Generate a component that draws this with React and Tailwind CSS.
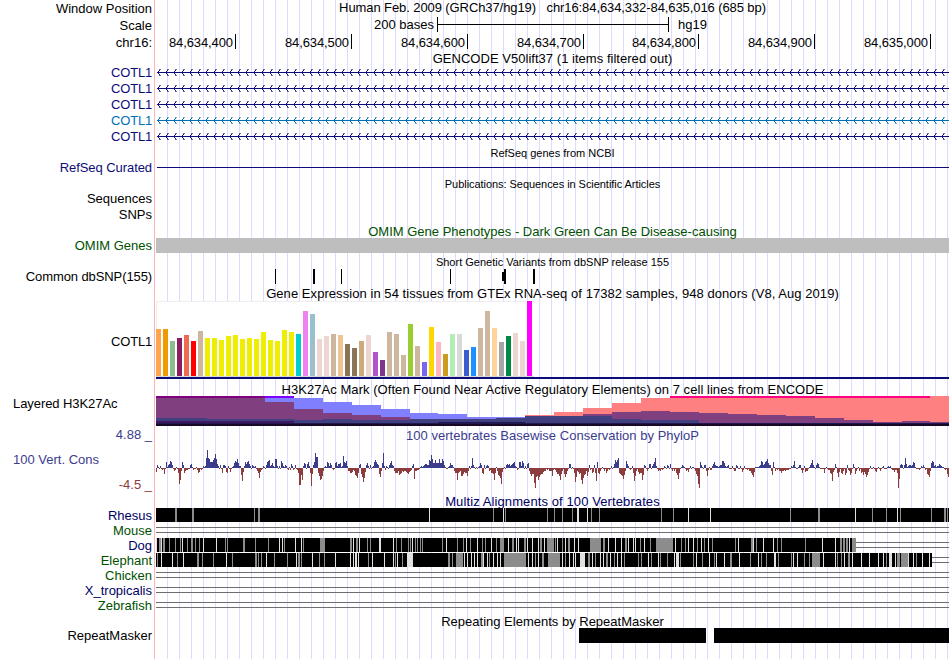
// src/App.jsx

import React from 'react';
import clsx from 'clsx';

const WIDTH = 793;

// Left column, one entry per row
const LABELS = [
  { text: 'Window Position', row: 'h-[17px] leading-[17px]' },
  { text: 'Scale', row: 'h-[17px] leading-[17px]' },
  { text: 'chr16:', row: 'h-[17px] leading-[17px] mb-[14px]' },
  { text: 'COTL1', row: 'h-4 leading-4 text-[#0c0c78] tracking-[-0.2px]' },
  { text: 'COTL1', row: 'h-4 leading-4 text-[#0c0c78] tracking-[-0.2px]' },
  { text: 'COTL1', row: 'h-4 leading-4 text-[#0c0c78] tracking-[-0.2px]' },
  { text: 'COTL1', row: 'h-4 leading-4 text-[#006fb4] tracking-[-0.2px]' },
  { text: 'COTL1', row: 'h-4 leading-4 text-[#0c0c78] tracking-[-0.2px] mb-[15px]' },
  { text: 'RefSeq Curated', row: 'h-4 leading-4 text-[#0c0c78] tracking-[-0.07px] mb-[15px]' },
  { text: 'Sequences', row: 'h-4 leading-4' },
  { text: 'SNPs', row: 'h-4 leading-4 mb-[15px]' },
  { text: 'OMIM Genes', row: 'h-4 leading-4 text-[#005000] mb-[15px]' },
  { text: 'Common dbSNP(155)', row: 'h-4 leading-4 tracking-[-0.1px] mb-4' },
  { text: 'COTL1', row: 'h-[78px] leading-[81px] tracking-[-0.2px] mb-[17px]' },
  { text: 'Layered H3K27Ac', row: 'h-[30px] leading-4 tracking-[-0.07px] pl-[13px] text-left' },
];

const SPECIES = [
  { text: 'Rhesus', color: 'text-[#000064]' },
  { text: 'Mouse', color: 'text-[#005000]' },
  { text: 'Dog', color: 'text-[#000064]' },
  { text: 'Elephant', color: 'text-[#005000]' },
  { text: 'Chicken', color: 'text-[#005000]' },
  { text: 'X_tropicalis', color: 'text-[#000064]' },
  { text: 'Zebrafish', color: 'text-[#005000]' },
];

const RULER = [
  { text: '84,634,400', width: 80 },
  { text: '84,634,500', width: 116 },
  { text: '84,634,600', width: 116 },
  { text: '84,634,700', width: 116 },
  { text: '84,634,800', width: 115 },
  { text: '84,634,900', width: 116 },
  { text: '84,635,000', width: 116 },
];

// x, y, width, height
const SNPS = [
  [119, 0, 1, 15],
  [157, 0, 2, 15],
  [185, 0, 1, 15],
  [294, 0, 1, 15],
  [346, 3, 2, 9],
  [348, 0, 2, 15],
  [377, 0, 2, 15],
];

const YELLOW = '#eeee00';
const TISSUES = [
  [47, '#ffa54f'], [47, '#ee9a00'], [35, '#8fbc8f'], [38, '#8b1c62'], [41, '#ee6a50'], [35, '#ff0000'], [45, '#cdb79e'],
  [38, YELLOW], [38, YELLOW], [36, YELLOW], [40, YELLOW], [41, YELLOW], [37, YELLOW], [38, YELLOW], [37, YELLOW],
  [44, YELLOW], [36, YELLOW], [35, YELLOW], [46, YELLOW], [44, YELLOW],
  [42, '#00cdcd'], [65, '#ee82ee'], [62, '#9ac0cd'], [37, '#eed5d2'], [40, '#eed5d2'], [42, '#cdb79e'], [41, '#eec591'],
  [32, '#8b7355'], [28, '#8b7355'], [35, '#cdaa7d'], [41, '#eed5d2'], [24, '#b452cd'], [16, '#7a378b'], [44, '#cdb79e'],
  [42, '#cdb79e'], [21, '#cdb79e'], [52, '#9acd32'], [30, '#cdb79e'], [14, '#7a67ee'], [49, '#ffd700'], [34, '#ffb6c1'],
  [22, '#cd9b1d'], [42, '#b4eeb4'], [42, '#d9d9d9'], [26, '#3a5fcd'], [29, '#1e90ff'], [48, '#cdb79e'], [65, '#cdb79e'],
  [48, '#ffd39b'], [34, '#a6a6a6'], [40, '#008b45'], [43, '#eed5d2'], [35, '#eed5d2'], [75, '#ff00ff'],
];

// Stacked signal areas, each a list of [x, top] steps that ends at `end`
const H3K27 = [
  { fill: '#8080ff', end: 398, steps: [[109, 2], [167, 6], [196, 9], [225, 13], [254, 17], [282, 18], [311, 21], [340, 21]] },
  { fill: '#8000ff', end: 138, bottom: 2, steps: [[109, 0]] },
  { fill: '#ff8080', end: 793, steps: [[369, 19], [398, 16], [427, 12], [456, 7], [485, 2], [514, 0]] },
  { fill: '#ff0080', end: 774, bottom: 2, steps: [[514, 0]] },
  { fill: '#804080', end: 311, steps: [[0, 0], [109, 6], [138, 13], [167, 17], [196, 19], [225, 21], [254, 23]] },
  { fill: '#800080', end: 109, bottom: 2, steps: [[0, 0]] },
  { fill: '#804080', end: 793, steps: [[369, 20], [427, 18], [456, 16], [485, 15], [514, 16], [543, 17], [572, 18], [601, 19], [630, 20], [659, 22], [688, 24], [717, 26], [746, 25], [774, 26]] },
  { fill: '#404080', end: 543, steps: [[0, 22], [51, 23], [138, 24], [167, 23], [196, 24], [254, 23], [340, 22], [369, 20], [456, 23], [485, 24]] },
  { fill: '#401860', end: 138, steps: [[0, 25]] },
  { fill: '#201850', end: 793, steps: [[0, 27], [22, 27], [138, 27], [282, 26], [369, 27], [543, 27]] },
  { fill: '#180828', end: 793, steps: [[0, 28]] },
];

// Conservation score per pixel, in pixels above or below the axis
const PHYLOP = [
  -4, 3, 1, -1, 2, -1, -2, -1, -6, -1, 6, 1, 3, 4, 7, 6, 3, -1, -3, -2, 1, -1, -5, -16, -12, -3, 6, 3, -5, -3,
  -2, -2, -1, -1, 3, 4, 1, -2, -1, -1, 1, -2, -5, -4, -1, -2, -1, 2, 1, 2, 10, 18, 10, 9, 6, 6, 6, 8, 10, 14,
  9, 4, 2, 0, 3, -1, -5, 3, 3, 2, -4, -5, 2, -1, -4, -1, 1, 2, 5, 7, 6, 9, 5, 2, 2, -7, -13, -4, 2, 6,
  4, 6, 7, 4, 2, -1, 3, 2, 1, 2, -1, -3, -5, -10, -4, -2, -1, 2, 1, -1, 3, 6, 7, 8, 2, 3, 5, 2, 1, 9,
  9, 2, -1, 2, -1, 7, 5, 2, 1, 3, 2, -1, -2, 1, -2, 4, 2, -2, -1, 3, -1, -2, -5, -17, -17, -7, -12, 2, 5, 4,
  -1, 4, 6, 2, -5, -18, -6, 3, 6, 15, 11, 11, -5, -8, -12, -11, -8, -3, 1, 2, 1, 6, 5, 2, 5, 3, -1, -2, -1, 5,
  6, 2, 4, 4, 5, 1, 2, 12, 6, 5, 7, 2, -3, -3, -5, -5, -4, -2, -3, -7, -8, -10, -5, 3, 4, -6, -9, -14, -10, -4,
  3, 5, 2, -1, 3, -1, 1, 2, 6, 8, 6, 4, 3, -6, -9, -3, 5, 15, 2, -2, 2, 1, -1, 3, 5, 7, 3, 2, -3,
  -5, -5, -5, -3, -7, -6, -5, -3, -4, -3, -3, -4, -5, -6, -4, -3, -2, 2, 4, -11,
  // 84,634,556
  -3, -3, -2, -2, -1, 1, 2, 1, 2, 3, 4, 4, 3, 3, 8, 7, 13, 9, 5, 5, 8, 5, 5, 5, 9, 5, 5, 9, 7, 3,
  1, -1, -1, 1, 2, 5, 3, 3, 1, -3, -5, -5, -12, -5, -4, -3, -8, -8, -6, -4, -5, -5, -8, -3, 2, -1, 2, 10, 3, 1,
  -1, 1, -1, 1, 2, 5, 3, -5, -6, 3, -1, 2, 3, 2, -3, -2, -5, -5, -6, -12, -5, 1, -3, -7, -8, -10, -16, -4, -1, 1,
  -1, 3, 4, 3, 4, 2, 3, 4, 5, 6, 2, 1, -2, -1, 6, 6, 2, 7, 5, -1, 2, -1, 4, 5, -3, -6, -8, -6, -6, -15,
  -20, -9, -8, -12, -9, -7, -6, -6, -4, -3, -3, -1, -2, -1, -3, -3, -3, -8, -2, -1, -2, -4, -6, -6, -8, -12, -6, -3, -1, -6,
  -9, -6, -3, -1, 4, 4, -1, 1, -1, -5, -14, -9, -3, -4, -6, -5, -12, -16, -10, -7, -6, -3, -8, -4, 3, -2, -1, -5, -4, 3,
  -5, -13, 6, -5, -6, -3, -1, 1, -1, -3, -1, -5, -3, -1, -2, -1, 2, -1, 1, 4, 8, 6, 8, 10, -5, -6, -7, -8, -11, -7,
  -3, 7, 4, 2, -1, -2, -1, 2, -5, -13, -8, -3, -1, -4, -6, -5, -5, -12, -7, 3, 2, -1, -3, -1, 4, 4, -1, 2, 4, 6,
  10, 2, -1, -3, -2, -3, -1, -2, -1, 2, 1, -1, 3, 2, -1, 4, -1, -3, -1, -3, -1, -5, -7, -11, -5, -1, 1,
  // 84,634,786
  3, 2, 1, -1, -3, -2, -4, -1, 2, -1, 1, 1, -1, -3, -6, -8, -16, -20, 6, 3, 1, -1, 3, 3, -3, -8, -2, 1, -2, -2,
  2, 4, 6, 3, 2, 2, 1, 2, 3, 3, 7, 7, 5, 2, 1, 2, 3, -1, -1, -1, 2, -1, -3, -3, 3, 2, -1, -1, 2, -1,
  -4, -2, 2, -1, -1, -2, -1, -3, -3, -5, -7, -9, -4, 1, 1, 1, 1, 2, 3, 7, 6, 3, 4, 6, 7, 9, 5, 3, 3, -3,
  -7, 6, 1, -3, -1, -2, -1, -3, -3, -5, -3, -3, -2, -3, -2, -2, -2, -1, -1, 2, 1, 3, 7, 1, -1, -1, 1, 3, 3, -2,
  -5, -2, 2, -4, -3, -3, -1, 1, 3, 5, 8, 3, 1, -1, 3, 5, 4, 1, -1, -1, -1, -1, -5, -1, 1, -1, -2, -2, -5, -6,
  -13, -4, -2, 4, 1, -5, -9, -4, -1, -5, -6, -3, -1, -7, -5, 3, -2, -3, -7, -5, -1, 4, 1, -6, -3, -1, 1, -3, -1, -5,
  -4, -7, -4, -6, -9, -7, -4, -1, 2, -1, -1, 1, -1, -3, -4, -1, 1, -1, -3, -1, 1, 2, -1, -1, -1, 1, 2, 1, 2, -1,
  -2, -2, -4, -2, -2, -5, -20, -11, 3, 4, 3, -1, 3, 10, 4, 1, 2, 3, 3, 2, 3, 6, 5, 1, -1, -1, -1, -2, -1, 2,
  1, 3, 1, -2, -1, -6, -7, -9, -3, 5, 7, 6, 2, 3, 1, 2, 2, 4, 3, 2, 1, 1, -1, -2, -1, -6, -9,
];

// Alignment gaps: offset, shade (g = grey, w = white) and an optional width
const RHESUS = '19g2 36g2 98g 102g2 273w 337g 347w 349g 391g 398g 406g 416g 421w2 431w 435g 443g 505g 517g 532w 554w 634g 662g2 699w 716g 730g 741w 744g 775g 788g2 791g';
const DOG = '0w 3g2 5w 7g2 13g 19g 24g 26w 31g 35g2 39g 43g 47w 60w 69g 71g 87g2 99g 112g 123w 126w 128g 139w 145w 147g 164g5 194g2 197w 200g2 203w 211g 214g 223w2 237w 240g 245g 252g 254g 256w 259g 261g 264g 266g 286g 290w 301g 307g 310w 314g 321w 326g 329g 335w 340g 344g4 352w 356g2 360w 362w 368g2 371w 376w 382w 384g2 388w 391g7 399g 401w 406g 409w 412g2 418w 422w 434g11 447g2 452w 459w 465w 469g2 472w 477w 479w 484g 488w 494g 500g17 519w 525g 529g 532w 537w 541g 545w 548g 552w 556g 579g 582w 595g2 597w 600g 607w 617w 621g 625g 649g 666w 679w 684g2 687g2 690g2 693w 696g4';
const ELEPHANT = '1g 5w 16w 21g 27w 41g2 46g 57g 70w 76g 99g2 102g 105g 110w 118g 131g 140w 142g2 145g 156w 163g 168g 179w 194w 197w 199w2 202w 212g 216w 228w 237w 239g 241w 246g 251w5 256w 292g2 296g 300g7 308w 311w 315w 318w 321w 325g2 327w 331w 333g 337w 341w 344w 348g22 372w 376w 379g 382w 386g2 392g12 406w 409g 413w 417w 419w 424w5 432g2 436w 439g 444w 447w 450g2 454w 458g 461w 465w 468g 482g 485g 492w 495g 502w 504g 511g 518w 520w3 524g 537g 540w 546g 553w 558g 560w 568w 574g2 583w 594g 602w 605g 610g 618w2 622g 635g 637w 641w 648g 653g 656g8 667w 679w 681g 685g 688w 692g2 696w 705w 713w 722w 727w 730g 733w3 739w 741g3 745g7 752w 757w 760g 766w 773w';

const Title = ({ children, className }) => (
  <div className={clsx('text-center whitespace-pre', className)}>{children}</div>
);

const Drawing = ({ height, className, children }) => (
  <svg width={WIDTH} height={height} shapeRendering="crispEdges" className={clsx('block', className)}>
    {children}
  </svg>
);

// Strand arrows, drawn pixel by pixel
const arrow = (x) =>
  `M${x} 7h1v1h-1zM${x + 1} 6h1v1h-1zM${x + 1} 8h1v1h-1zM${x + 2} 5h1v1h-1zM${x + 2} 9h1v1h-1z`;
const arrowEnds = (x) => `M${x + 3} 4h1v1h-1zM${x + 3} 10h1v1h-1zM${x + 2} 4h1v1h-1zM${x + 2} 10h1v1h-1z`;

const GeneRow = ({ color }) => {
  const tips = Array.from({ length: 99 }, (_, i) => 1 + i * 8);
  return (
    <Drawing height={16}>
      <rect x="1" y="7" width={WIDTH - 1} height="1" fill={color} />
      <path d={tips.map(arrow).join('')} fill={color} />
      <path d={tips.map(arrowEnds).join('')} fill={color} fillOpacity="0.6" />
    </Drawing>
  );
};

const stepPath = ({ steps, end, bottom = 30 }) => {
  const top = steps.map(([x, y], i) => `V${y}H${i + 1 < steps.length ? steps[i + 1][0] : end}`).join('');
  return `M${steps[0][0]} ${bottom}${top}V${bottom}Z`;
};

const GapLines = ({ from = 0 }) => (
  <>
    <rect x={from} y="4" width={WIDTH - from} height="1" fill="#6e6e6e" />
    <rect x={from} y="9" width={WIDTH - from} height="1" fill="#6e6e6e" />
  </>
);

const Alignment = ({ gaps, end = WIDTH }) => (
  <Drawing height={15}>
    {end < WIDTH && <GapLines from={end} />}
    <rect width={end} height="14" fill="#000" />
    {gaps.split(' ').map((gap) => {
      const [, x, shade, w] = gap.match(/(\d+)([gw])(\d*)/);
      return <rect key={gap} x={x} width={w || 1} height="14" fill={shade === 'g' ? '#8c8c8c' : '#e1e1e1'} />;
    })}
  </Drawing>
);

const NoAlignment = () => (
  <Drawing height={15}>
    <GapLines />
  </Drawing>
);

const App = () => {
  return (
    <div className="flex h-[659px] w-[950px] overflow-hidden bg-white font-['Liberation_Sans',Arial,sans-serif] text-[13px] text-black">
      {/* Track labels */}
      <div className="w-[155px] shrink-0 border-r border-[#ffb4b4] pr-[2px] text-right whitespace-nowrap">
        {LABELS.map((label, i) => (
          <div key={i} className={label.row}>{label.text}</div>
        ))}
        <div className="flex h-[82px] flex-col text-[#3c3c8c]">
          <div className="h-[17px] leading-[17px]">4.88 _</div>
          <div className="mt-[8px] h-[17px] pl-[13px] text-left leading-[17px]">100 Vert. Cons</div>
          <div className="mt-[8px] h-[17px] leading-[17px] text-[#8c3c3c]">-4.5 _</div>
        </div>
        {SPECIES.map((item) => (
          <div key={item.text} className={clsx('h-[15px] leading-[15px]', item.color)}>{item.text}</div>
        ))}
        <div className="mt-[15px] h-4 leading-4">RepeatMasker</div>
      </div>

      {/* Tracks */}
      <div className="ml-px w-[793px] shrink-0 bg-[repeating-linear-gradient(to_right,transparent_0px,transparent_11px,#dcdcff_11px,#dcdcff_12px)]">
        <Title className="h-[17px] leading-[16px] tracking-[-0.09px]">{'Human Feb. 2009 (GRCh37/hg19)   chr16:84,634,332-84,635,016 (685 bp)'}</Title>
        <div className="flex h-[17px] leading-[16px]">
          <div className="w-[281px] pr-[3px] text-right">200 bases</div>
          <div className="flex h-[15px] w-[232px] items-center border-x border-black">
            <div className="h-px w-full bg-black" />
          </div>
          <div className="pl-[9px]">hg19</div>
        </div>
        <div className="flex h-[17px] leading-[17px] tracking-[-0.1px]">
          {RULER.map((mark) => (
            <div key={mark.text} className="h-[15px] border-r border-black pr-[2px] text-right" style={{ width: mark.width }}>
              {mark.text}
            </div>
          ))}
        </div>

        <Title className="h-[14px] leading-[15px] tracking-[0.03px]">GENCODE V50lift37 (1 items filtered out)</Title>
        <GeneRow color="#0c0c78" />
        <GeneRow color="#0c0c78" />
        <GeneRow color="#0c0c78" />
        <GeneRow color="#006fb4" />
        <GeneRow color="#0c0c78" />

        <Title className="h-[15px] text-[11px] leading-[16px]">RefSeq genes from NCBI</Title>
        <div className="h-4 pt-[7px] pl-px">
          <div className="h-px bg-[#0c0c78]" />
        </div>

        <Title className="mb-8 h-[15px] text-[11px] leading-[16px] tracking-[-0.05px]">Publications: Sequences in Scientific Articles</Title>

        <Title className="h-[15px] leading-[18px] text-[#005000]">OMIM Gene Phenotypes - Dark Green Can Be Disease-causing</Title>
        <div className="mb-px h-[15px] bg-[#bebebe]" />

        <Title className="h-[15px] text-[11px] leading-[16px]">Short Genetic Variants from dbSNP release 155</Title>
        <Drawing height={16}>
          {SNPS.map(([x, y, w, h]) => (
            <rect key={x} x={x} y={y} width={w} height={h} />
          ))}
        </Drawing>

        {/* GTEx expression */}
        <Title className="h-4 leading-[17px] tracking-[0.06px]">Gene Expression in 54 tissues from GTEx RNA-seq of 17382 samples, 948 donors (V8, Aug 2019)</Title>
        <div className="h-[78px] border-b-2 border-[#0c0c78]">
          <div className="flex h-[76px] w-[378px] items-end gap-[2px] border-b border-[#d9d9d9] bg-white shadow-[inset_1px_1px_0_#eeeeee]">
            {TISSUES.map(([height, color], i) => (
              <div key={i} className="w-[5px] shrink-0" style={{ height, backgroundColor: color }} />
            ))}
          </div>
        </div>

        <Title className="h-[17px] leading-[21px] tracking-[0.05px]">H3K27Ac Mark (Often Found Near Active Regulatory Elements) on 7 cell lines from ENCODE</Title>
        <Drawing height={30}>
          {H3K27.map((area, i) => (
            <path key={i} d={stepPath(area)} fill={area.fill} />
          ))}
        </Drawing>

        {/* Conservation */}
        <Title className="h-[17px] leading-[20px] tracking-[0.02px] text-[#3c3c8c]">100 vertebrates Basewise Conservation by PhyloP</Title>
        <Drawing height={50}>
          {PHYLOP.map((v, i) => (
            <rect
              key={i}
              x={i}
              y={v > 0 ? 25 - v : 25}
              width="1"
              height={Math.max(1, Math.abs(v))}
              fill={v > 0 ? '#3c3c8c' : '#8c3c3c'}
            />
          ))}
        </Drawing>

        <Title className="h-[15px] leading-[17px] tracking-[0.1px] text-[#000064]">Multiz Alignments of 100 Vertebrates</Title>
        <Alignment gaps={RHESUS} />
        <NoAlignment />
        <Alignment gaps={DOG} end={700} />
        <Alignment gaps={ELEPHANT} end={776} />
        <NoAlignment />
        <NoAlignment />
        <NoAlignment />

        <Title className="h-[15px] leading-[17px]">Repeating Elements by RepeatMasker</Title>
        <div className="flex h-[15px] gap-2 pl-[423px]">
          <div className="w-[127px] bg-black" />
          <div className="grow bg-black" />
        </div>
      </div>
    </div>
  );
};

export default App;
